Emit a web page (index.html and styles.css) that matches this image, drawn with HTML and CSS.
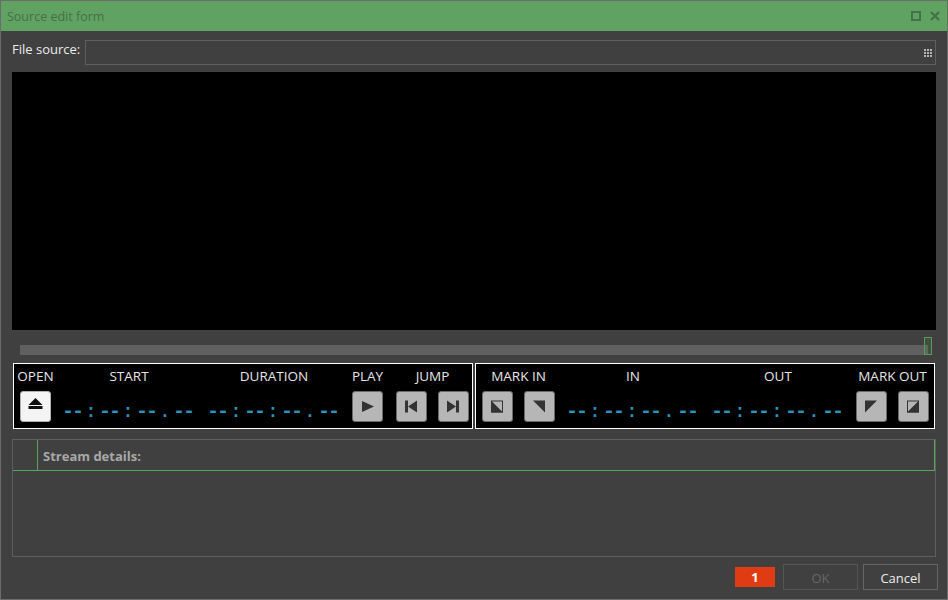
FILE: index.html
```html
<!DOCTYPE html>
<html lang="en">
<head>
    <meta charset="UTF-8">
    <meta name="viewport" content="width=device-width, initial-scale=1.0">
    <title>Source edit form</title>
    <link rel="stylesheet" href="styles.css">
</head>
<body>
    <div class="window">
        <header class="titlebar">
            <span class="title">Source edit form</span>
            <svg class="win-icon" width="10" height="10" viewBox="0 0 10 10"><rect x="1" y="1" width="8" height="8" fill="none" stroke="#44704a" stroke-width="2"/></svg>
            <svg class="win-icon" width="10" height="10" viewBox="0 0 10 10"><path d="M1 1 L9 9 M9 1 L1 9" stroke="#44704a" stroke-width="2"/></svg>
        </header>

        <main class="content">
            <div class="source-row">
                <label class="source-label">File source:</label>
                <div class="source-input">
                    <svg width="8" height="8" viewBox="0 0 8 8" fill="#b4b4b4"><path d="M0 0h2v2H0zM3 0h2v2H3zM6 0h2v2H6zM0 3h2v2H0zM3 3h2v2H3zM6 3h2v2H6zM0 6h2v2H0zM3 6h2v2H3zM6 6h2v2H6z"/></svg>
                </div>
            </div>

            <div class="video"></div>

            <div class="slider">
                <div class="slider-track"></div>
                <div class="slider-thumb"></div>
            </div>

            <div class="controls">
                <section class="panel">
                    <div class="col col-one">
                        <span class="col-label">OPEN</span>
                        <div class="btn-row">
                            <button class="btn btn-open"><svg width="29" height="29" viewBox="0 0 29 29"><path d="M14.5 6 L21.5 13 H7.5 Z M7.5 14 H21.5 V17 H7.5 Z"/></svg></button>
                        </div>
                    </div>
                    <div class="col col-tc gap-13">
                        <span class="col-label">START</span>
                        <div class="timecode"><span>--</span><i>:</i><span>--</span><i>:</i><span>--</span><i>.</i><span>--</span></div>
                    </div>
                    <div class="col col-tc gap-15">
                        <span class="col-label">DURATION</span>
                        <div class="timecode"><span>--</span><i>:</i><span>--</span><i>:</i><span>--</span><i>.</i><span>--</span></div>
                    </div>
                    <div class="col col-one gap-13">
                        <span class="col-label">PLAY</span>
                        <div class="btn-row">
                            <button class="btn"><svg width="29" height="29" viewBox="0 0 29 29"><path d="M9 9 L21 14.5 L9 20 Z"/></svg></button>
                        </div>
                    </div>
                    <div class="col col-two gap-13">
                        <span class="col-label">JUMP</span>
                        <div class="btn-row">
                            <button class="btn"><svg width="29" height="29" viewBox="0 0 29 29"><path d="M8 8.5 H11 V20.5 H8 Z M11 14.5 L20 8.5 V20.5 Z"/></svg></button>
                            <button class="btn"><svg width="29" height="29" viewBox="0 0 29 29"><path d="M8 8.5 L17 14.5 L8 20.5 Z M17 8.5 H20 V20.5 H17 Z"/></svg></button>
                        </div>
                    </div>
                </section>

                <section class="panel">
                    <div class="col col-two">
                        <span class="col-label">MARK IN</span>
                        <div class="btn-row">
                            <button class="btn"><svg width="29" height="29" viewBox="0 0 29 29"><path d="M8 8.5 L20 20.5 H8 Z"/><rect x="8.5" y="9" width="11" height="11" fill="none" stroke="#333"/></svg></button>
                            <button class="btn"><svg width="29" height="29" viewBox="0 0 29 29"><path d="M8 8.5 H20 V20.5 Z"/></svg></button>
                        </div>
                    </div>
                    <div class="col col-tc gap-13">
                        <span class="col-label">IN</span>
                        <div class="timecode"><span>--</span><i>:</i><span>--</span><i>:</i><span>--</span><i>.</i><span>--</span></div>
                    </div>
                    <div class="col col-tc gap-15">
                        <span class="col-label">OUT</span>
                        <div class="timecode"><span>--</span><i>:</i><span>--</span><i>:</i><span>--</span><i>.</i><span>--</span></div>
                    </div>
                    <div class="col col-two gap-13">
                        <span class="col-label">MARK OUT</span>
                        <div class="btn-row">
                            <button class="btn"><svg width="29" height="29" viewBox="0 0 29 29"><path d="M8 8.5 H20 L8 20.5 Z"/></svg></button>
                            <button class="btn"><svg width="29" height="29" viewBox="0 0 29 29"><path d="M20 8.5 V20.5 H8 Z"/><rect x="8.5" y="9" width="11" height="11" fill="none" stroke="#333"/></svg></button>
                        </div>
                    </div>
                </section>
            </div>

            <section class="details">
                <div class="details-head">
                    <div class="details-gutter"></div>
                    <div class="details-title">Stream details:</div>
                </div>
            </section>
        </main>

        <footer class="footer">
            <span class="badge">1</span>
            <button class="action" disabled>OK</button>
            <button class="action">Cancel</button>
        </footer>
    </div>
</body>
</html>
```
FILE: styles.css
```css
* {
    box-sizing: border-box;
}

body {
    margin: 0;
    font-family: "Open Sans", "Noto Sans", sans-serif;
    font-size: 13px;
    color: #e6e6e6;
    background-color: #404040;
}

.window {
    display: flex;
    flex-direction: column;
    width: 948px;
    height: 600px;
    border: 1px solid #6c6c6c;
    background-color: #404040;
    overflow: hidden;
}

.titlebar {
    display: flex;
    align-items: center;
    gap: 9px;
    height: 30px;
    padding: 0 7px 0 6px;
    background-color: #60a262;
}

.title {
    flex: 1;
    padding-top: 1px;
    color: #46704a;
    font-size: 12.5px;
}

.content {
    padding: 9px 11px 0;
}

.source-row {
    display: flex;
    height: 25px;
}

.source-label {
    width: 73px;
    color: #ececec;
    font-size: 13px;
    line-height: 19px;
}

.source-input {
    display: flex;
    align-items: center;
    justify-content: flex-end;
    flex: 1;
    height: 25px;
    padding-right: 3px;
    border: 1px solid #5f5f5f;
}

.video {
    height: 258px;
    margin-top: 7px;
    background-color: #000;
}

.slider {
    position: relative;
    display: flex;
    align-items: flex-end;
    height: 18px;
    margin-top: 7px;
    padding: 0 8px;
}

.slider-track {
    width: 100%;
    height: 10px;
    background-color: #606060;
}

.slider-thumb {
    position: absolute;
    top: 0;
    right: 4px;
    width: 8px;
    height: 18px;
    border: 1px solid #5a9a5c;
    background-color: rgba(96, 162, 98, 0.15);
}

.controls {
    display: flex;
    gap: 2px;
    margin: 8px 0 0 1px;
}

.panel {
    display: flex;
    width: 460px;
    height: 66px;
    padding: 0 0 0 6px;
    border: 1px solid #fff;
    background-color: #000;
}

.col {
    display: flex;
    flex-direction: column;
    align-items: center;
    color: #e6e6e6;
}

.col-one {
    width: 31px;
}

.col-two {
    width: 73px;
}

.col-tc {
    width: 130px;
}

.gap-13 { margin-left: 13px; }
.gap-15 { margin-left: 15px; }

.col-label {
    height: 27px;
    padding-top: 3px;
    font-size: 13.5px;
    line-height: 18px;
    white-space: nowrap;
}

.btn-row {
    display: flex;
    gap: 11px;
}

.btn {
    display: flex;
    align-items: center;
    justify-content: center;
    width: 31px;
    height: 31px;
    padding: 0;
    border: 1px solid #6a6a6a;
    border-radius: 3px;
    background-color: #b6b6b6;
}

.btn svg {
    fill: #333;
}

.btn-open {
    border-color: #b0b0b0;
    background-color: #f4f4f4;
}

.btn-open svg {
    fill: #111;
}

.timecode {
    display: flex;
    align-items: baseline;
    width: 130px;
    height: 31px;
    margin-left: -2px;
    padding-top: 5px;
    font-family: "Liberation Mono", monospace;
    font-size: 18px;
    font-weight: 700;
    line-height: 31px;
    color: #2a94bb;
    white-space: nowrap;
}

.timecode span {
    width: 19px;
    margin-left: -1px;
    margin-right: 1px;
    font-size: 20px;
    letter-spacing: -2px;
}

.timecode i {
    width: 18.5px;
    font-style: normal;
    text-align: center;
}

.details {
    height: 118px;
    margin-top: 10px;
    border: 1px solid #5f5f5f;
}

.details-head {
    display: flex;
    height: 31px;
    border-bottom: 1px solid #57a65a;
}

.details-gutter {
    width: 25px;
    border-right: 1px solid #57a65a;
}

.details-title {
    flex: 1;
    padding-left: 5px;
    color: #a8a8a8;
    font-size: 13px;
    font-weight: 700;
    line-height: 32px;
    border-right: 1px solid #57a65a;
}

.footer {
    display: flex;
    align-items: center;
    justify-content: flex-end;
    gap: 5px;
    padding: 7px 9px 0 0;
}

.badge {
    width: 40px;
    height: 20px;
    margin-right: 3px;
    background-color: #e03c14;
    color: #fff;
    font-size: 13px;
    font-weight: 700;
    line-height: 20px;
    text-align: center;
}

.action {
    width: 75px;
    height: 26px;
    padding: 1px 0 0;
    border: 1px solid #666;
    background: none;
    color: #ececec;
    font-family: inherit;
    font-size: 13px;
}

.action:disabled {
    border-color: #555;
    color: #666;
}
```
